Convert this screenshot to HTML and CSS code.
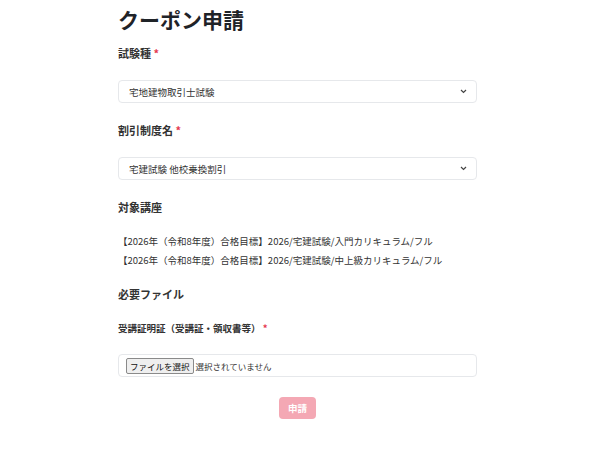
FILE: index.html
```html
<!DOCTYPE html>
<html lang="ja">
<head>
<meta charset="utf-8">
<link rel="stylesheet" href="styles.css">
</head>
<body>
<main class="page">
  <h1 class="title">クーポン申請</h1>

  <div class="field">
    <div class="label">試験種 <span class="req">*</span></div>
    <div class="select">
      <span>宅地建物取引士試験</span>
      <svg class="chev" width="7" height="5" viewBox="0 0 7 5"><path d="M1 1 L3.5 3.5 L6 1" fill="none" stroke="#444" stroke-width="1.2"/></svg>
    </div>
  </div>

  <div class="field">
    <div class="label">割引制度名 <span class="req">*</span></div>
    <div class="select">
      <span>宅建試験 他校乗換割引</span>
      <svg class="chev" width="7" height="5" viewBox="0 0 7 5"><path d="M1 1 L3.5 3.5 L6 1" fill="none" stroke="#444" stroke-width="1.2"/></svg>
    </div>
  </div>

  <div class="field">
    <div class="label">対象講座</div>
    <ul class="courses">
      <li>【2026年（令和8年度）合格目標】2026/宅建試験/入門カリキュラム/フル</li>
      <li>【2026年（令和8年度）合格目標】2026/宅建試験/中上級カリキュラム/フル</li>
    </ul>
  </div>

  <div class="section">必要ファイル</div>
  <div class="upload">
    <div class="label sub">受講証明証（受講証・領収書等） <span class="req">*</span></div>
    <div class="file">
      <span class="file-btn">ファイルを選択</span>
      <span class="file-none">選択されていません</span>
    </div>
  </div>

  <div class="actions">
    <button class="submit" type="button">申請</button>
  </div>
</main>
</body>
</html>
```

FILE: styles.css
```css
* { box-sizing: border-box; }
html, body { margin: 0; padding: 0; background: #fff; }
body {
  font-family: "Noto Sans CJK JP", "Noto Sans", sans-serif;
  color: #222;
}
.page {
  width: 359px;
  margin-left: 118px;
  padding-top: 4px;
}
.title {
  margin: 0;
  font-size: 21px;
  line-height: 30px;
  font-weight: 700;
  color: #1f2328;
}
.field { margin-top: 10px; }
.field + .field { margin-top: 18px; }
.label {
  font-size: 11px;
  font-weight: 700;
  line-height: 18px;
  color: #333;
}
.req { color: #e53950; font-weight: 700; }
.select {
  margin-top: 18px;
  height: 23px;
  border: 1px solid #e6e8eb;
  border-radius: 4px;
  display: flex;
  align-items: center;
  justify-content: space-between;
  padding: 0 9px 0 10px;
  font-size: 9.5px;
  color: #333;
}
.courses {
  list-style: none;
  margin: 15.5px 0 0;
  padding: 0;
  font-size: 9.5px;
  line-height: 19px;
  color: #333;
}
.section {
  margin-top: 15.5px;
  font-size: 11px;
  font-weight: 700;
  line-height: 18px;
  color: #333;
}
.upload { margin-top: 16px; }
.sub { font-size: 9.5px; }
.file {
  margin-top: 17px;
  height: 23px;
  border: 1px solid #e6e8eb;
  border-radius: 4px;
  display: flex;
  align-items: center;
  padding: 0 7px;
  gap: 2px;
  font-size: 8.5px;
  color: #333;
}
.file-btn {
  border: 1px solid #8a8a8a;
  background: #efefef;
  border-radius: 2px;
  padding: 0 3px;
  height: 16px;
  line-height: 14px;
  font-size: 8.5px;
  color: #111;
}
.actions {
  display: flex;
  justify-content: center;
  margin-top: 20px;
}
.submit {
  width: 37px;
  height: 22px;
  border: none;
  border-radius: 4px;
  background: #f4a8b4;
  color: #fff;
  font-family: inherit;
  font-size: 9.5px;
  font-weight: 700;
  padding: 0;
}
```
